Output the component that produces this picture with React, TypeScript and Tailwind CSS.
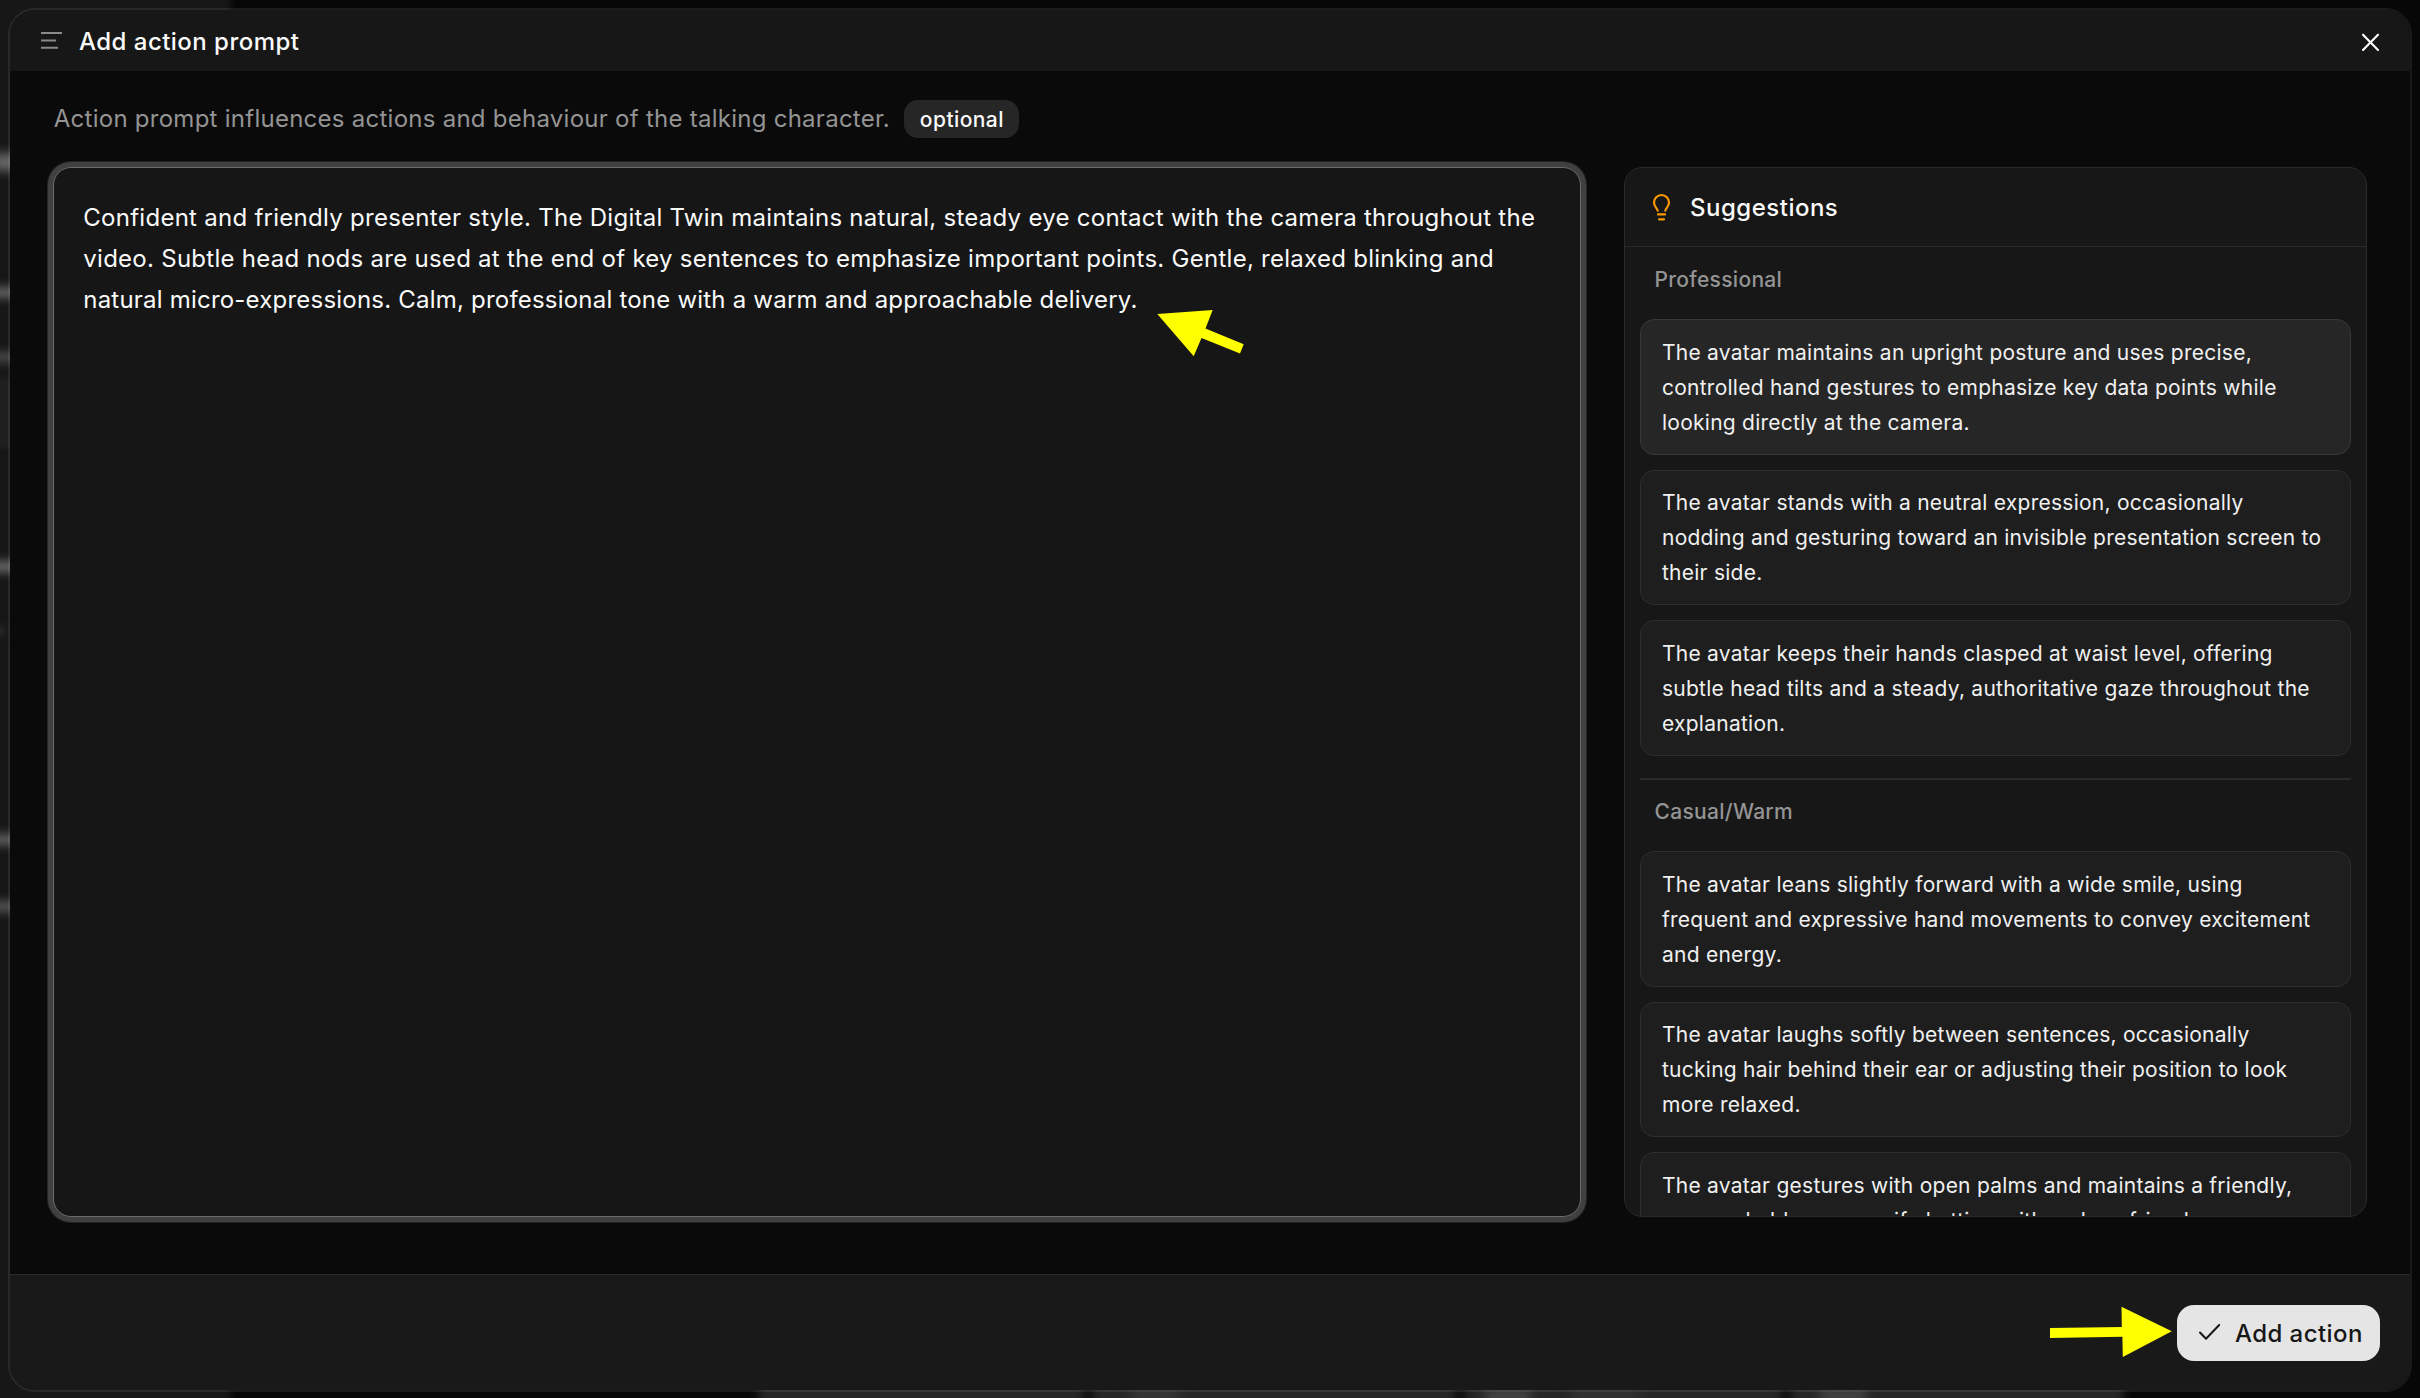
type Group = { label: string; items: string[] };

const groups: Group[] = [
  {
    label: 'Professional',
    items: [
      'The avatar maintains an upright posture and uses precise,\ncontrolled hand gestures to emphasize key data points while\nlooking directly at the camera.',
      'The avatar stands with a neutral expression, occasionally\nnodding and gesturing toward an invisible presentation screen to\ntheir side.',
      'The avatar keeps their hands clasped at waist level, offering\nsubtle head tilts and a steady, authoritative gaze throughout the\nexplanation.',
    ],
  },
  {
    label: 'Casual/Warm',
    items: [
      'The avatar leans slightly forward with a wide smile, using\nfrequent and expressive hand movements to convey excitement\nand energy.',
      'The avatar laughs softly between sentences, occasionally\ntucking hair behind their ear or adjusting their position to look\nmore relaxed.',
      'The avatar gestures with open palms and maintains a friendly,\napproachable aura, as if chatting with a close friend.',
    ],
  },
];

/** Blurred page that shows around the edges of the dialog. */
function Backdrop() {
  return (
    <div className="absolute inset-0 overflow-hidden bg-[#070707]">
      <div className="absolute -inset-y-4 -left-4 w-[247px] bg-[#171717] blur-[3px]" />
      <div className="absolute top-[154px] -left-2 h-[16px] w-8 bg-[#6e6e6e] blur-[6px]" />
      <div className="absolute top-[287px] -left-2 h-[11px] w-8 bg-[#636363] blur-[5px]" />
      <div className="absolute top-[352px] -left-2 h-[10px] w-8 bg-[#4c4c4c] blur-[5px]" />
      <div className="absolute top-[378px] -left-2 h-[70px] w-8 bg-[#1f1f1f] blur-[2px]" />
      <div className="absolute top-[561px] -left-2 h-[11px] w-8 bg-[#6a6a6a] blur-[5px]" />
      <div className="absolute top-[627px] -left-4 h-[8px] w-5 bg-[#333333] blur-[4px]" />
      <div className="absolute top-[834px] -left-2 h-[11px] w-8 bg-[#606060] blur-[5px]" />
      <div className="absolute top-[901px] -left-2 h-[11px] w-8 bg-[#545454] blur-[5px]" />
      <div className="absolute -bottom-4 left-[758px] flex h-[40px] w-[1366px] gap-[8px] blur-[5px]">
        <div className="w-[326px] bg-[#262626]" />
        <div className="w-[364px] bg-[#262626]" />
        <div className="w-[318px] bg-[#262626]" />
        <div className="flex-1 bg-[#262626]" />
      </div>
      <div className="absolute -bottom-1 left-[1130px] h-3 w-[50px] bg-[#3a3a3a] blur-[6px]" />
      <div className="absolute -bottom-1 left-[1485px] h-3 w-[46px] bg-[#4c4c4c] blur-[6px]" />
      <div className="absolute -bottom-1 left-[1570px] h-3 w-[70px] bg-[#363636] blur-[6px]" />
      <div className="absolute -bottom-1 left-[1820px] h-3 w-[46px] bg-[#4a4a4a] blur-[6px]" />
    </div>
  );
}

function Header() {
  return (
    <header className="flex h-[61px] shrink-0 items-start bg-[#171717] pr-[28px] pl-[31px]">
      <svg className="mt-[21px] h-5 w-[22px]" viewBox="0 0 22 20" stroke="#8a8a8a" strokeWidth="2">
        <path d="M0 2h21M0 9.4h15M0 16.7h17" />
      </svg>
      <h1 className="mt-[17px] ml-[16px] text-[24px] leading-[29px] font-medium tracking-[0.47px] text-[#fafafa]">
        Add action prompt
      </h1>
      <button className="mt-[21px] ml-auto">
        <svg
          className="h-[22px] w-[22px]"
          viewBox="0 0 22 22"
          stroke="#ffffff"
          strokeWidth="2.1"
          strokeLinecap="round"
          fill="none"
        >
          <path d="M3 3.7L18 18.9M18 3.7L3 18.9" />
        </svg>
      </button>
    </header>
  );
}

function SuggestionsPanel() {
  return (
    <aside className="flex h-[1050px] w-[743px] flex-col overflow-hidden rounded-[18px] border border-[#2a2a2a] bg-[#171717]">
      <div className="flex h-[79px] shrink-0 items-start border-b border-[#2a2a2a] pl-[25px]">
        <svg
          className="mt-[22px] h-8 w-6"
          viewBox="0 0 24 32"
          fill="none"
          stroke="#fe9a00"
          strokeWidth="2.2"
          strokeLinecap="round"
        >
          <path d="M7.7 20.6C7.2 18 4 16.8 4 12.5a7.5 7.5 0 0 1 15 0C19 16.8 15.8 18 15.3 20.6" />
          <path d="M8 24.4h7M9 29.3h5" />
        </svg>
        <h2 className="mt-[25px] ml-4 text-[24px] leading-[29px] font-medium tracking-[0.5px] text-[#fafafa]">
          Suggestions
        </h2>
      </div>
      <div className="min-h-0 flex-1 overflow-hidden px-[15px]">
        {groups.map((group, g) => (
          <section key={group.label} className={g > 0 ? 'mt-[22.5px] border-t-2 border-[#2b2b2b] pt-[19px]' : 'pt-5'}>
            <h3 className="mb-[27px] pl-[14.5px] text-[21px] leading-[25px] font-medium tracking-[0.3px] text-[#949494]">
              {group.label}
            </h3>
            <div className="flex flex-col gap-[15px]">
              {group.items.map((item, i) => (
                <div
                  key={item}
                  className={`h-[135.5px] rounded-[14px] border px-[21px] pt-[14.9px] text-[21px] leading-[35px] tracking-[0.25px] whitespace-pre text-[#f0f0f0] ${
                    g === 0 && i === 0 ? 'border-[#383838] bg-[#262626]' : 'border-[#2e2e2e] bg-[#1e1e1e]'
                  }`}
                >
                  {item}
                </div>
              ))}
            </div>
          </section>
        ))}
      </div>
    </aside>
  );
}

function Arrows() {
  return (
    <>
      <svg className="pointer-events-none absolute top-[308px] left-[1155px] h-[50px] w-[92px]" viewBox="1155 308 92 50" fill="#ffff00">
        <path d="M1157.3 314L1212.7 310L1205.5 328.5L1243.7 344.3L1240 353.6L1201.5 338L1193.7 356.3Z" />
      </svg>
      <svg className="pointer-events-none absolute top-[1305px] left-[2048px] h-[54px] w-[126px]" viewBox="2048 1305 126 54" fill="#ffff00">
        <path d="M2050 1328L2121.8 1327L2121.5 1306.8L2171.8 1331.3L2122.8 1357L2122.4 1336.8L2050 1338Z" />
      </svg>
    </>
  );
}

export default function App() {
  return (
    <div className="relative h-[1398px] w-[2420px] overflow-hidden font-[Inter,sans-serif]">
      <Backdrop />
      <div className="relative h-full p-2 pb-[6px]">
        <div className="flex h-full flex-col overflow-hidden rounded-[27px] border-2 border-white/8 bg-[#0a0a0a] bg-clip-padding">
          <Header />
          <main className="flex-1 px-[43px] pt-[29px]">
            <div className="flex items-start">
              <p className="mt-1 w-[851px] pl-[0.8px] text-[24px] leading-[29px] tracking-[0.26px] whitespace-nowrap text-[#949494]">
                Action prompt influences actions and behaviour of the talking character.
              </p>
              <span className="h-[38px] w-[115px] rounded-[14px] bg-[#262626] pt-[7px] pl-[0.8px] text-center text-[21px] leading-[25px] font-medium tracking-[0.43px] text-[#fafafa]">
                optional
              </span>
            </div>
            <div className="mt-[29px] flex gap-[43px]">
              <div className="h-[1050px] w-[1528px] rounded-[18px] border border-[#6b6b6b] bg-[#161616] pt-[29px] pr-[27px] pl-[29.3px] text-[24px] leading-[41px] tracking-[0.27px] text-[#fafafa] shadow-[0_0_0_5px_#404040,0_0_0_6px_#242424]">
                Confident and friendly presenter style. The Digital Twin maintains natural, steady eye contact with the
                camera throughout the video. Subtle head nods are used at the end of key sentences to emphasize
                important points. Gentle, relaxed blinking and{' '}
                <span className="tracking-[0.21px]">
                  natural micro-expressions. Calm, professional tone with a warm and approachable delivery.
                </span>
              </div>
              <SuggestionsPanel />
            </div>
          </main>
          <footer className="flex h-[116px] shrink-0 items-start justify-end border-t border-[#2c2c2c] bg-[#191919] pt-[30px] pr-[30px]">
            <button className="flex h-14 w-[203px] items-start rounded-[17px] bg-[#e5e5e5] text-[#171717]">
              <svg
                className="mt-[15px] ml-5 h-6 w-[26px]"
                viewBox="0 0 26 24"
                fill="none"
                stroke="currentColor"
                strokeWidth="2"
                strokeLinecap="round"
                strokeLinejoin="round"
              >
                <path d="M3 12.5L9 18.7L22.2 5" />
              </svg>
              <span className="mt-[14px] ml-[12px] text-[24px] leading-[29px] font-medium tracking-[0.43px] whitespace-nowrap">
                Add action
              </span>
            </button>
          </footer>
        </div>
      </div>
      <Arrows />
    </div>
  );
}
